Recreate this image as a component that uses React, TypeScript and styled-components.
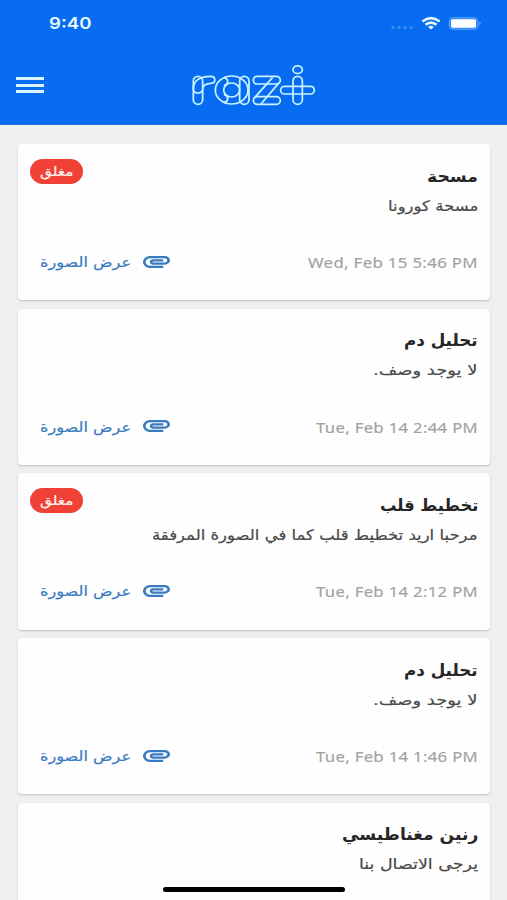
import React, { useLayoutEffect, useRef, useState } from "react";
import styled, { createGlobalStyle } from "styled-components";

const Global = createGlobalStyle`
  * { box-sizing: border-box; }
  html, body { margin: 0; height: 100%; overflow: hidden; background: #efefef; }
`;

const Screen = styled.main`
  width: 507px;
  height: 900px;
  overflow: hidden;
  position: relative;
  background: #efefef;
  font-family: "DejaVu Sans", sans-serif;
`;

const Header = styled.header`
  height: 125px;
  background: #086cf3;
  border-bottom: 1px solid #2270d2;
`;

const StatusBar = styled.div`
  height: 46px;
  padding: 0 26px 0 49px;
  display: flex;
  align-items: center;
  justify-content: space-between;
  color: #e9faff;
`;

const Clock = styled.div`
  font: 600 16px/20px Inter, sans-serif;
  height: 20px;
`;

const Indicators = styled.svg`
  width: 92px;
  height: 20px;
  display: block;
`;

const Toolbar = styled.div`
  height: 78px;
  padding: 0 16px;
  display: grid;
  grid-template-columns: 28px 1fr 28px;
  align-items: center;
`;

const MenuButton = styled.button`
  border: 0;
  padding: 0;
  background: none;
  width: 28px;
  height: 16px;
  display: flex;
  flex-direction: column;
  justify-content: space-between;
`;

const MenuLine = styled.span`
  height: 3px;
  background: #d9f4ff;
`;

const Logo = styled.svg`
  width: 127px;
  height: 44px;
  justify-self: center;
  display: block;
`;

const List = styled.section`
  padding: 19px 17px 0 18px;
  display: flex;
  flex-direction: column;
  gap: 8.3px;
`;

const Card = styled.article`
  flex: none;
  height: 156.4px;
  border-radius: 4px;
  background: #fefefe;
  box-shadow: 0 1px 2px rgba(0, 0, 0, 0.2);
  padding: 15px 12px 0;
  display: grid;
  grid-template-columns: auto 1fr;
  grid-template-rows: 89px 1fr;
`;

const Copy = styled.div`
  grid-column: 2;
  grid-row: 1;
  display: flex;
  flex-direction: column;
  align-items: flex-end;
  padding-top: 5.5px;
`;

const Badge = styled.div`
  grid-column: 1;
  grid-row: 1;
  width: 53px;
  height: 25px;
  border-radius: 13px;
  background: #ef4136;
  color: #fff0ec;
  font-size: 13px;
  -webkit-text-stroke: 0.2px currentColor;
  display: flex;
  align-items: center;
  justify-content: center;
`;

const Title = styled.h2`
  margin: 0;
  height: 28px;
  font-size: 16.5px;
  line-height: 24px;
  font-weight: 700;
  color: #262626;
`;

const Description = styled.p`
  margin: 0;
  height: 28px;
  font-size: 14.5px;
  line-height: 27px;
  color: #484848;
  -webkit-text-stroke: 0.2px currentColor;
`;

const Footer = styled.footer`
  grid-column: 1 / -1;
  height: 28px;
  display: flex;
  justify-content: space-between;
  align-items: center;
  padding-left: 10px;
`;

const ImageLink = styled.div`
  display: flex;
  align-items: center;
  gap: 12px;
  font-size: 14px;
  line-height: 24px;
  color: #397bc1;
  -webkit-text-stroke: 0.2px currentColor;
`;

const Clip = styled.svg`
  width: 27px;
  height: 12px;
  margin-top: -1px;
`;

const DateText = styled.time`
  font: 14.5px/24px "Noto Sans", sans-serif;
  letter-spacing: 0.3px;
  color: #a2a2a2;
  -webkit-text-stroke: 0.15px currentColor;
`;

const HomeBar = styled.div`
  position: absolute;
  left: 163px;
  top: 887px;
  width: 182px;
  height: 5px;
  border-radius: 3px;
  background: #000;
`;

const Slot = styled.span<{ $w: number }>`
  display: block;
  width: ${(p) => p.$w}px;
  white-space: nowrap;
  direction: ltr;
`;

const Stretch = styled.span<{ $rtl?: boolean }>`
  display: inline-block;
  transform-origin: 0 50%;
  direction: ${(p) => (p.$rtl ? "rtl" : "ltr")};
`;

function FitText({ width, rtl, children }: { width: number; rtl?: boolean; children: string }) {
  const ref = useRef<HTMLSpanElement>(null);
  const [scale, setScale] = useState(1);
  useLayoutEffect(() => {
    if (ref.current) setScale(width / ref.current.offsetWidth);
  }, [width, children]);
  return (
    <Slot $w={width}>
      <Stretch ref={ref} $rtl={rtl} style={{ transform: `scaleX(${scale})` }}>
        {children}
      </Stretch>
    </Slot>
  );
}

type Item = {
  title: string;
  titleWidth: number;
  text: string;
  textWidth: number;
  date?: string;
  dateWidth?: number;
  closed?: boolean;
};

const items: Item[] = [
  { title: "مسحة", titleWidth: 51, text: "مسحة كورونا", textWidth: 90, date: "Wed, Feb 15 5:46 PM", dateWidth: 170, closed: true },
  { title: "تحليل دم", titleWidth: 74, text: "لا يوجد وصف.", textWidth: 105, date: "Tue, Feb 14 2:44 PM", dateWidth: 162 },
  { title: "تخطيط قلب", titleWidth: 98, text: "مرحبا اريد تخطيط قلب كما في الصورة المرفقة", textWidth: 326, date: "Tue, Feb 14 2:12 PM", dateWidth: 162, closed: true },
  { title: "تحليل دم", titleWidth: 74, text: "لا يوجد وصف.", textWidth: 105, date: "Tue, Feb 14 1:46 PM", dateWidth: 162 },
  { title: "رنين مغناطيسي", titleWidth: 136, text: "يرجى الاتصال بنا", textWidth: 119 },
];

function RequestCard({ item }: { item: Item }) {
  return (
    <Card>
      {item.closed && (
        <Badge>
          <FitText width={33} rtl>مغلق</FitText>
        </Badge>
      )}
      <Copy>
        <Title><FitText width={item.titleWidth} rtl>{item.title}</FitText></Title>
        <Description><FitText width={item.textWidth} rtl>{item.text}</FitText></Description>
      </Copy>
      {item.date && (
        <Footer>
          <ImageLink>
            <FitText width={91} rtl>عرض الصورة</FitText>
            <Clip viewBox="2 7 20 11" preserveAspectRatio="none" fill="currentColor" stroke="none">
              <path d="M2 12.5C2 9.46 4.46 7 7.5 7H18c2.21 0 4 1.79 4 4s-1.79 4-4 4H9.5C8.12 15 7 13.88 7 12.5S8.12 10 9.5 10H17v2H9.41c-.55 0-.55 1 0 1H18c1.1 0 2-.9 2-2s-.9-2-2-2H7.5C5.57 9 4 10.57 4 12.5S5.57 16 7.5 16H17v2H7.5C4.46 18 2 15.54 2 12.5z" />
            </Clip>
          </ImageLink>
          <DateText><FitText width={item.dateWidth ?? 162}>{item.date}</FitText></DateText>
        </Footer>
      )}
    </Card>
  );
}

export default function App() {
  return (
    <Screen>
      <Global />
      <Header>
        <StatusBar>
          <Clock><FitText width={43}>9:40</FitText></Clock>
          <Indicators viewBox="389 13 92 20">
            <g fill="#438ff6">
              <circle cx="393" cy="27.5" r="1.6" />
              <circle cx="399" cy="27.5" r="1.6" />
              <circle cx="405" cy="27.5" r="1.6" />
              <circle cx="411" cy="27.5" r="1.6" />
            </g>
            <g fill="none" stroke="#e9faff" strokeWidth="2.5">
              <path d="M422.4 21.4Q431 14.9 439.6 21.4" />
              <path d="M425.5 24.8Q431 20.4 436.5 24.8" />
            </g>
            <path d="M428.2 26.9Q431 24.8 433.8 26.9L431 29.5Z" fill="#e9faff" />
            <rect x="449.3" y="17.7" width="28.6" height="11.6" rx="3.5" fill="#3488f7" stroke="#5ba1fa" />
            <rect x="451" y="19.3" width="25" height="8.4" rx="1.8" fill="#fff" />
            <path d="M479.2 21.2Q482.4 23.5 479.2 25.8Z" fill="#5ba1fa" />
          </Indicators>
        </StatusBar>
        <Toolbar>
          <MenuButton aria-label="menu"><MenuLine /><MenuLine /><MenuLine /></MenuButton>
          <Logo viewBox="570 189 381 132" fill="none" stroke="#c9f3ff" strokeWidth="5.2" strokeLinejoin="round">
            <rect x="580" y="229" width="28" height="84" rx="14" />
            <path d="M580 267C580 242 600 229 632 229C649 229 648 250 633 250C617 250 608 258 608 267C608 283 580 283 580 267Z" />
            <ellipse cx="695" cy="270" rx="49" ry="42" />
            <ellipse cx="695" cy="270" rx="24" ry="21" />
            <path d="M672 232C687 237 687 250 672 257M672 283C687 290 687 302 672 308" />
            <rect x="719" y="229" width="28" height="84" rx="14" />
            <rect x="760" y="229" width="81" height="23" rx="11.5" />
            <rect x="760" y="290" width="81" height="23" rx="11.5" />
            <path d="M762 295L818 232M783 312L838 247" />
            <rect x="842" y="259" width="101" height="23" rx="11.5" />
            <rect x="879" y="229" width="28" height="84" rx="14" />
            <ellipse cx="893" cy="209" rx="14" ry="11.5" />
          </Logo>
        </Toolbar>
      </Header>
      <List>
        {items.map((item, i) => <RequestCard key={i} item={item} />)}
      </List>
      <HomeBar />
    </Screen>
  );
}
